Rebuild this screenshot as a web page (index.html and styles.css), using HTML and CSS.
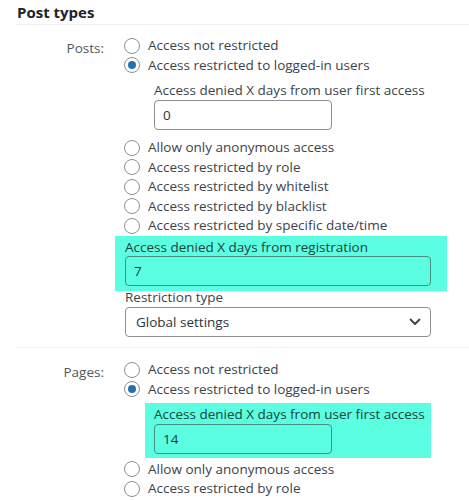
FILE: index.html
```html
<!DOCTYPE html>
<html lang="en">
<head>
<meta charset="utf-8">
<title>Post types</title>
<link rel="stylesheet" href="styles.css">
</head>
<body>
<main class="settings">
  <h2 class="section-title">Post types</h2>

  <div class="form-row posts">
    <div class="row-label">Posts:</div>
    <div class="row-field">
      <label class="radio"><input type="radio" name="posts"><span>Access not restricted</span></label>
      <label class="radio"><input type="radio" name="posts" checked><span>Access restricted to logged-in users</span></label>
      <div class="sub-field">
        <div class="field-label">Access denied X days from user first access</div>
        <input class="text-input narrow" type="text" value="0">
      </div>
      <div class="radio-group">
        <label class="radio"><input type="radio" name="posts"><span>Allow only anonymous access</span></label>
        <label class="radio"><input type="radio" name="posts"><span>Access restricted by role</span></label>
        <label class="radio"><input type="radio" name="posts"><span>Access restricted by whitelist</span></label>
        <label class="radio"><input type="radio" name="posts"><span>Access restricted by blacklist</span></label>
        <label class="radio"><input type="radio" name="posts"><span>Access restricted by specific date/time</span></label>
      </div>
      <div class="highlight highlight-wide">
        <div class="field-label">Access denied X days from registration</div>
        <input class="text-input full" type="text" value="7">
      </div>
      <div class="field-label restriction-label">Restriction type</div>
      <div class="select">
        <span>Global settings</span>
        <svg class="chevron" width="12" height="8" viewBox="0 0 12 8"><path d="M1.5 1.5 L6 6 L10.5 1.5" fill="none" stroke="#3c434a" stroke-width="1.8" stroke-linecap="round" stroke-linejoin="round"/></svg>
      </div>
    </div>
  </div>

  <div class="form-row pages">
    <div class="row-label">Pages:</div>
    <div class="row-field">
      <label class="radio"><input type="radio" name="pages"><span>Access not restricted</span></label>
      <label class="radio"><input type="radio" name="pages" checked><span>Access restricted to logged-in users</span></label>
      <div class="highlight highlight-narrow">
        <div class="field-label">Access denied X days from user first access</div>
        <input class="text-input narrow" type="text" value="14">
      </div>
      <label class="radio"><input type="radio" name="pages"><span>Allow only anonymous access</span></label>
      <label class="radio"><input type="radio" name="pages"><span>Access restricted by role</span></label>
    </div>
  </div>
</main>
</body>
</html>
```

FILE: styles.css
```css
html, body {
  margin: 0;
  padding: 0;
  background: #ffffff;
  overflow: hidden;
}

body {
  font-family: "Open Sans", "Noto Sans", "Liberation Sans", sans-serif;
  font-size: 13.5px;
  color: #3c434a;
}

.settings {
  width: 469px;
}

.section-title {
  margin: 0 0 0 16px;
  padding: 2px 0 2px 1px;
  height: 20px;
  line-height: 20px;
  font-size: 15px;
  font-weight: 700;
  color: #1d2327;
  border-bottom: 1px solid #efefef;
}

.form-row {
  display: grid;
  grid-template-columns: 88px 1fr;
  column-gap: 21px;
  margin-left: 16px;
}

.posts {
  padding-top: 11px;
  padding-bottom: 10px;
  border-bottom: 1px solid #efefef;
}

.pages {
  padding-top: 12px;
}

.row-label {
  text-align: right;
  line-height: 19.5px;
  padding-top: 3px;
  color: #50575e;
}

.row-field {
  display: flex;
  flex-direction: column;
  align-items: flex-start;
}

.radio {
  display: flex;
  align-items: center;
  height: 19.5px;
  line-height: 19.5px;
  white-space: nowrap;
}

.radio input {
  appearance: none;
  -webkit-appearance: none;
  box-sizing: border-box;
  width: 16px;
  height: 16px;
  margin: 0 8px 0 -1px;
  border: 1px solid #8c8f94;
  border-radius: 50%;
  background: #fff;
  display: grid;
  place-content: center;
}

.radio input:checked::before {
  content: "";
  width: 8px;
  height: 8px;
  border-radius: 50%;
  background: #2271b1;
}

.sub-field {
  margin: 6px 0 0 29px;
}

.radio-group {
  margin-top: 8px;
  display: flex;
  flex-direction: column;
}

.field-label {
  line-height: 19px;
  white-space: nowrap;
}

.text-input {
  display: block;
  box-sizing: border-box;
  height: 30px;
  margin: 0;
  padding: 0 8px;
  font: inherit;
  color: #2c3338;
  background: #fff;
  border: 1px solid #8c8f94;
  border-radius: 4px;
}

.narrow {
  width: 178px;
}

.full {
  width: 306px;
}

.highlight {
  box-sizing: border-box;
  background: #5bfee0;
  color: #21403b;
}

.highlight .text-input {
  background: transparent;
  border-color: #4a8e82;
  color: #1d3a35;
}

.highlight-wide {
  width: 332px;
  margin-left: -10px;
  padding: 2.5px 0 5px 10px;
}

.highlight-wide .field-label {
  line-height: 18px;
}

.highlight-narrow {
  width: 286px;
  margin: 4px 0 2px 20px;
  padding: 1.5px 0 4px 9px;
}

.restriction-label {
  margin-top: -3px;
}

.select {
  box-sizing: border-box;
  width: 306px;
  height: 30px;
  display: flex;
  align-items: center;
  justify-content: space-between;
  padding: 0 9px 0 10px;
  border: 1px solid #8c8f94;
  border-radius: 4px;
  background: #fff;
  color: #2c3338;
}

.chevron {
  display: block;
}
```
